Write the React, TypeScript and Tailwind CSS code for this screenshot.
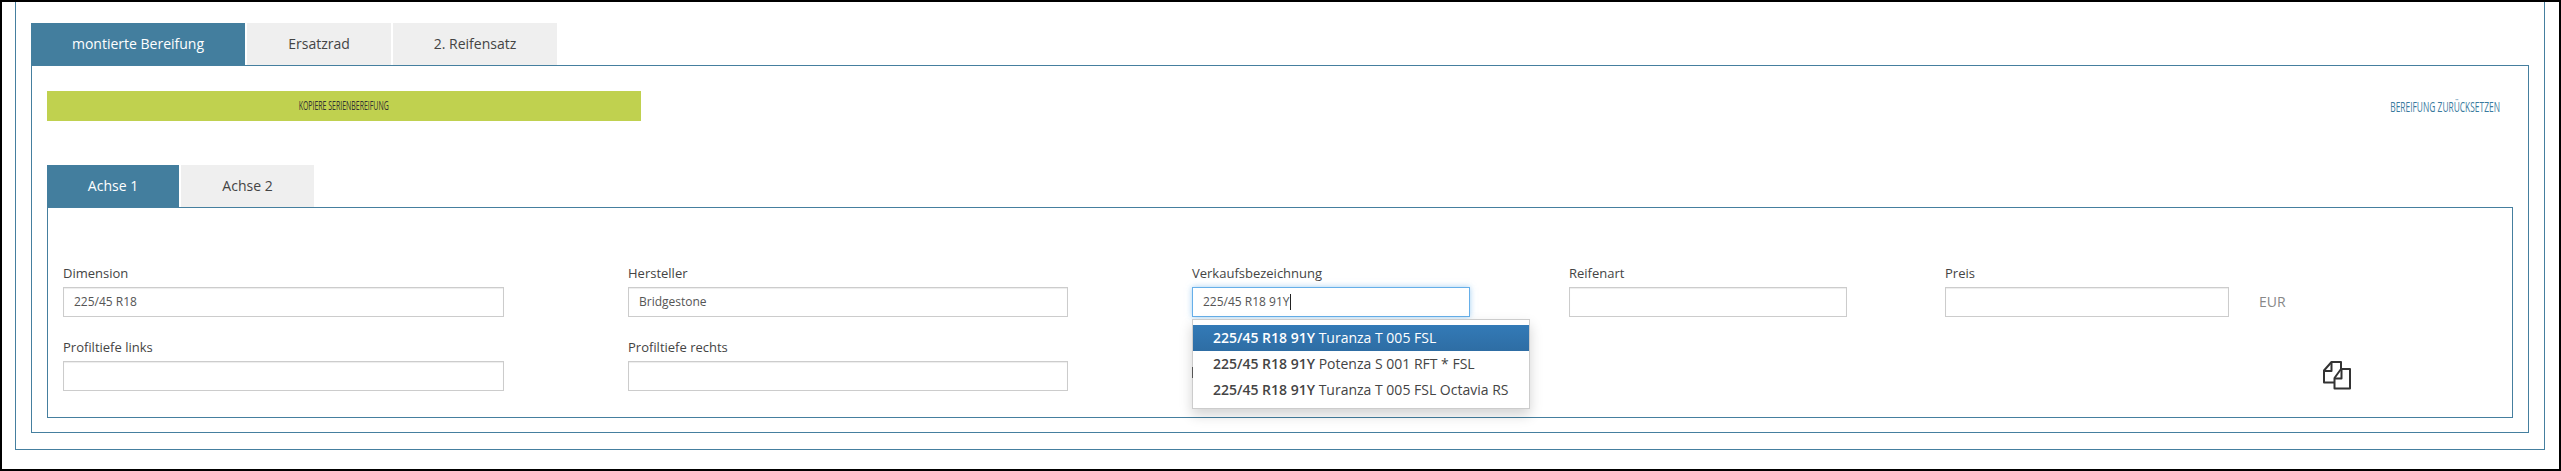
const teal = "border-[#457f9f]";

function Field({ label, value, width }: { label: string; value?: string; width: string }) {
  return (
    <div className={`flex flex-col ${width}`}>
      <label className="h-[20px] text-[13px] leading-[18px] whitespace-nowrap text-[#444]">{label}</label>
      <div className="mt-[3px] flex h-[30px] items-center border border-[#ccc] bg-white pl-[10px] text-[12px] whitespace-nowrap text-[#555] shadow-[inset_0_1px_1px_rgba(0,0,0,0.075)]">
        {value}
      </div>
    </div>
  );
}

function CopyIcon() {
  return (
    <svg width="28" height="29" viewBox="0 0 28 29" fill="none" stroke="#333" strokeWidth="2" strokeLinejoin="round">
      <path d="M18 8V1H8.5L1 9.5V21.5H11" />
      <path d="M1 10H8.5V1" />
      <path d="M18 8H27V27.5H11.5V17L18 8Z" />
      <path d="M11.5 17.5H18.5V8" />
    </svg>
  );
}

const rows = ["Turanza T 005 FSL", "Potenza S 001 RFT * FSL", "Turanza T 005 FSL Octavia RS"];

export default function App() {
  return (
    <div className="h-[471px] w-[2561px] border-2 border-black bg-white pr-[14px] pb-[19px] pl-[13px] font-['Open_Sans',sans-serif]">
      <div className={`h-full border-x border-b ${teal} pt-[21px] pr-[15px] pl-[15px]`}>
        <div className="flex h-[42px] gap-[2px] text-[14px] leading-[42px]">
          <div className="w-[214px] bg-[#437e9e] text-center text-white">montierte Bereifung</div>
          <div className="w-[144px] bg-[#efefef] text-center text-[#444]">Ersatzrad</div>
          <div className="w-[164px] bg-[#efefef] text-center text-[#444]">2. Reifensatz</div>
        </div>
        <div className={`h-[368px] border ${teal} px-[15px] pt-[25px]`}>
          <div className="flex items-center justify-between pr-[13px]">
            <div className="flex h-[30px] w-[594px] items-center justify-center bg-[#c0d14f] text-[12px] text-[#333]">
              <span className="inline-block scale-x-[0.58] whitespace-nowrap">KOPIERE SERIENBEREIFUNG</span>
            </div>
            <span className="inline-block origin-right scale-x-[0.56] text-[15px] whitespace-nowrap text-[#3a7a9e]">BEREIFUNG ZURÜCKSETZEN</span>
          </div>
          <div className="mt-[44px] flex h-[42px] gap-[2px] text-[14px] leading-[42px]">
            <div className="w-[132px] bg-[#437e9e] text-center text-white">Achse 1</div>
            <div className="w-[133px] bg-[#efefef] text-center text-[#444]">Achse 2</div>
          </div>
          <div className={`relative h-[211px] border ${teal} pt-[56px] pl-[15px]`}>
            <div className="flex items-start">
              <Field label="Dimension" value="225/45 R18" width="w-[441px]" />
              <Field label="Hersteller" value="Bridgestone" width="ml-[124px] w-[440px]" />
              <div className="ml-[124px] flex w-[278px] flex-col">
                <label className="h-[20px] text-[13px] leading-[18px] text-[#444]">Verkaufsbezeichnung</label>
                <div className="mt-[3px] flex h-[30px] items-center border border-[#66afe9] pl-[10px] text-[12px] text-[#555] shadow-[0_0_6px_rgba(102,175,233,0.6)]">
                  225/45 R18 91Y<span className="h-[16px] w-[1px] bg-[#222]" />
                </div>
              </div>
              <Field label="Reifenart" width="ml-[99px] w-[278px]" />
              <Field label="Preis" width="ml-[98px] w-[284px]" />
              <span className="mt-[23px] ml-[30px] text-[14px] leading-[30px] text-[#888]">EUR</span>
            </div>
            <div className="mt-[21px] flex items-start">
              <Field label="Profiltiefe links" width="w-[441px]" />
              <Field label="Profiltiefe rechts" width="ml-[124px] w-[440px]" />
              <div className="relative z-10 mt-[29px] ml-[124px] h-[11px] w-[1px] bg-[#555]" />
              <div className="mt-[23px] ml-[1130px]"><CopyIcon /></div>
            </div>
            <div className="absolute top-[111px] left-[1144px] w-[338px] border border-[#ccc] bg-white py-[5px] text-[14px] leading-[26px] text-[#444] shadow-[0_6px_12px_rgba(0,0,0,0.175)]">
              {rows.map((r, i) => (
                <div key={r} className={`h-[26px] pl-[20px] whitespace-nowrap ${i === 0 ? "bg-linear-to-b from-[#337ab7] to-[#2e6da4] text-white" : ""}`}>
                  <b className="font-semibold">225/45 R18 91Y</b> {r}
                </div>
              ))}
            </div>
          </div>
        </div>
      </div>
    </div>
  );
}
